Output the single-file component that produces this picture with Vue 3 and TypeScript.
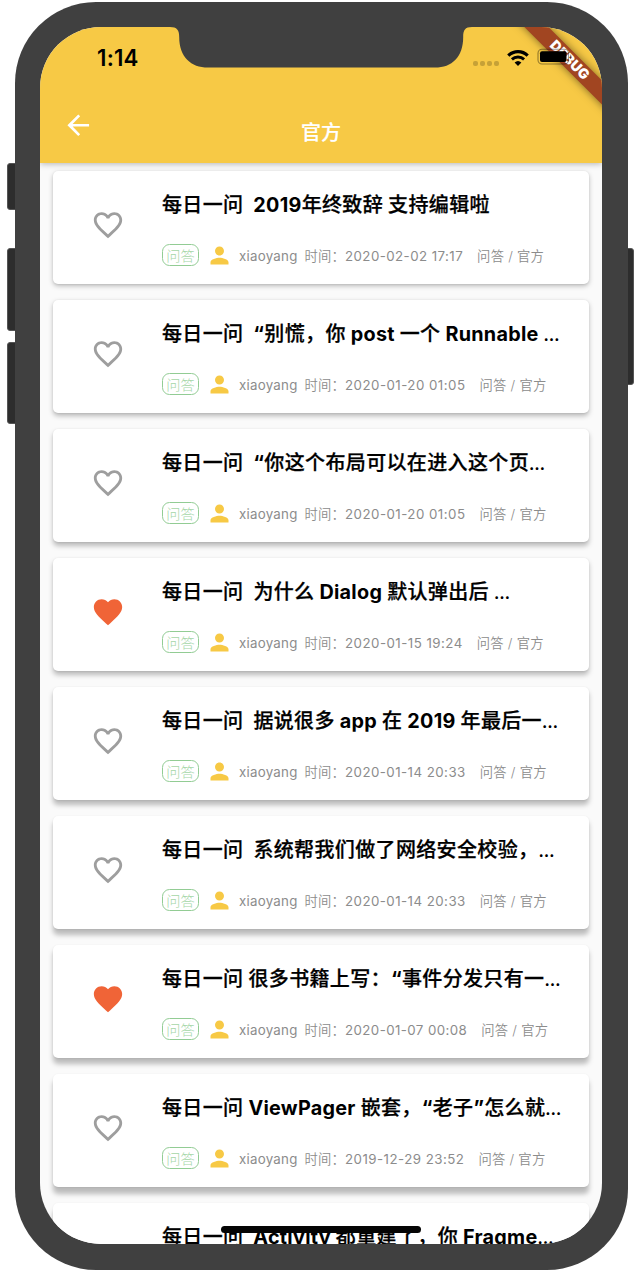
<script setup lang="ts">
interface Run {
  text: string
  kind: 'han' | 'latin' | 'dots'
}

interface Article {
  title: string
  date?: string
  liked: boolean
  dateSpacing?: number
}

const articles: Article[] = [
  { title: '每日一问  2019年终致辞 支持编辑啦', date: '2020-02-02 17:17', liked: false, dateSpacing: 0.43 },
  { title: '每日一问  “别慌，你 post 一个 Runnable …', date: '2020-01-20 01:05', liked: false, dateSpacing: 0.47 },
  { title: '每日一问  “你这个布局可以在进入这个页…', date: '2020-01-20 01:05', liked: false, dateSpacing: 0.47 },
  { title: '每日一问  为什么 Dialog 默认弹出后 …', date: '2020-01-15 19:24', liked: true, dateSpacing: 0.47 },
  { title: '每日一问  据说很多 app 在 2019 年最后一…', date: '2020-01-14 20:33', liked: false, dateSpacing: 0.45 },
  { title: '每日一问  系统帮我们做了网络安全校验，…', date: '2020-01-14 20:33', liked: false, dateSpacing: 0.45 },
  { title: '每日一问 很多书籍上写：“事件分发只有一…', date: '2020-01-07 00:08', liked: true, dateSpacing: 0.41 },
  { title: '每日一问 ViewPager 嵌套，“老子”怎么就…', date: '2019-12-29 23:52', liked: false, dateSpacing: 0.47 },
  { title: '每日一问  Activity 都重建了，你 Fragme…', liked: false },
]

// Splits a title so that Han and Latin text can carry different weights.
const runsOf = (title: string): Run[] =>
  (title.match(/…|[A-Za-z0-9“” ]+|[^A-Za-z0-9“” …]+/g) ?? []).map((text) => ({
    text,
    kind: text === '…' ? 'dots' : /^[A-Za-z0-9“” ]/.test(text) ? 'latin' : 'han',
  }))

const rows = articles.map((item) => ({ ...item, runs: runsOf(item.title) }))

// The light source sits above the screen, so lower cards throw longer shadows.
const cardShadow = (index: number): string => {
  const drop = 2 + index * 0.62
  return `0 ${drop.toFixed(1)}px 5px rgba(0, 0, 0, 0.25), 0 0.5px 2px rgba(0, 0, 0, 0.06)`
}
</script>

<template>
  <div class="stage">
    <i class="key key-mute"></i>
    <i class="key key-up"></i>
    <i class="key key-down"></i>
    <i class="key key-power"></i>
    <div class="phone">
      <div class="screen">
        <header class="appbar">
          <div class="status">
            <span class="clock">1:14</span>
            <span class="signal"><i v-for="n in 4" :key="n"></i></span>
            <svg class="wifi" viewBox="0 0 22 16">
              <path d="M1.3 5.7A13.8 13.8 0 0 1 20.7 5.7" fill="none" stroke="#000" stroke-width="3.2" />
              <path d="M4.9 9.4A8.8 8.8 0 0 1 17.1 9.4" fill="none" stroke="#000" stroke-width="2.9" />
              <path d="M7.6 12.6a5 5 0 0 1 6.8 0L11 16z" fill="#000" />
            </svg>
          </div>
          <div class="nav">
            <svg class="back" viewBox="0 0 24 24"><path d="M20 11H7.83l5.59-5.59L12 4l-8 8 8 8 1.41-1.41L7.83 13H20v-2z" /></svg>
            <h1>官方</h1>
          </div>
        </header>
        <main class="list">
          <article v-for="(item, i) in rows" :key="i" class="card" :style="{ boxShadow: cardShadow(i) }">
            <div class="like">
              <svg v-if="item.liked" class="heart liked" viewBox="0 0 24 24"><path d="M12 21.35l-1.45-1.32C5.4 15.36 2 12.28 2 8.5 2 5.42 4.42 3 7.5 3c1.74 0 3.41.81 4.5 2.09C13.09 3.81 14.76 3 16.5 3 19.58 3 22 5.42 22 8.5c0 3.78-3.4 6.86-8.55 11.54L12 21.35z" /></svg>
              <svg v-else class="heart" viewBox="0 0 24 24"><path d="M16.5 3c-1.74 0-3.41.81-4.5 2.09C10.91 3.81 9.24 3 7.5 3 4.42 3 2 5.42 2 8.5c0 3.78 3.4 6.86 8.55 11.54L12 21.35l1.45-1.32C18.6 15.36 22 12.28 22 8.5 22 5.42 19.58 3 16.5 3zm-4.4 15.55l-.1.1-.1-.1C7.14 14.24 4 11.39 4 8.5 4 6.5 5.5 5 7.5 5c1.54 0 3.04.99 3.57 2.36h1.87C13.46 5.99 14.96 5 16.5 5c2 0 3.5 1.5 3.5 3.5 0 2.89-3.14 5.74-7.9 10.05z" /></svg>
            </div>
            <div class="body">
              <h2><span v-for="(run, r) in item.runs" :key="r" :class="run.kind">{{ run.text }}</span></h2>
              <div v-if="item.date" class="meta">
                <span class="tag">问答</span>
                <svg class="person" viewBox="0 0 24 24"><path d="M12 12c2.21 0 4-1.79 4-4s-1.79-4-4-4-4 1.79-4 4 1.79 4 4 4zm0 2c-2.67 0-8 1.34-8 4v2h16v-2c0-2.66-5.33-4-8-4z" /></svg>
                <span class="author">xiaoyang</span>
                <span class="time">时间：</span>
                <span class="date" :style="{ letterSpacing: item.dateSpacing + 'px' }">{{ item.date }}</span>
                <span class="chapter">问答 / 官方</span>
              </div>
            </div>
          </article>
        </main>
        <div class="ribbon">DEBUG</div>
        <svg class="battery" viewBox="0 0 36 18">
          <rect x="1" y="1.2" width="30.5" height="14.8" rx="4" fill="none" stroke="#000" stroke-opacity=".4" stroke-width="1.1" />
          <rect x="3" y="3.2" width="26.5" height="10.8" rx="2" />
          <path d="M33 6.2v4.8c2.2-.8 2.2-4 0-4.8z" fill-opacity=".4" />
        </svg>
        <svg class="notch" viewBox="0 0 302 41"><path d="M0 0C7 0 9.2 3 9.2 10C9.2 30 21 40.6 38 40.6H265C282 40.6 293.2 30 293.2 10C293.2 3 295 0 302 0Z" /></svg>
        <div class="home"></div>
      </div>
    </div>
  </div>
</template>

<style>
body {
  margin: 0;
  background: #fff;
}
</style>

<style scoped>
.stage {
  position: relative;
  width: 642px;
  height: 1272px;
  overflow: hidden;
  background: #fff;
  font-family: Inter, "Noto Sans CJK SC", sans-serif;
}
.key {
  position: absolute;
  box-sizing: border-box;
  width: 12px;
  background: #2d2d2d;
  border: 1px solid #555;
  border-radius: 3px;
}
.key-mute { left: 6.5px; top: 163px; height: 47px; }
.key-up { left: 6.5px; top: 248px; height: 83px; }
.key-down { left: 6.5px; top: 342px; height: 82px; }
.key-power { left: 622px; top: 248px; height: 137px; }
.phone {
  position: relative;
  box-sizing: border-box;
  width: 613px;
  height: 1267.5px;
  margin-left: 14.5px;
  top: 2.3px;
  padding: 24.7px 25.5px 25.5px;
  border-radius: 81px;
  background: #404040;
}
.screen {
  position: relative;
  width: 562px;
  height: 1217px;
  overflow: hidden;
  border-radius: 61px;
  background: #fafafa;
}
.appbar {
  position: relative;
  z-index: 1;
  height: 136px;
  background: #f7c945;
  box-shadow: 0 1px 6px rgba(0, 0, 0, 0.28);
}
.status {
  display: flex;
  height: 62px;
  align-items: center;
}
.clock {
  width: 376px;
  padding-left: 57px;
  font-size: 22.3px;
  font-weight: 600;
  letter-spacing: 0.2px;
}
.signal {
  display: flex;
  gap: 2px;
  padding-top: 12px;
}
.signal i {
  width: 5px;
  height: 5px;
  border-radius: 2px;
  background: #c6a137;
}
.wifi {
  width: 22px;
  height: 16px;
  margin-left: 7.5px;
}
.nav {
  display: grid;
  grid-template-columns: 76px 1fr 76px;
  height: 76px;
  align-items: center;
}
.back {
  width: 32.5px;
  height: 32.5px;
  margin: -4px 0 0 21.5px;
  fill: #fff;
}
h1 {
  margin: 13px 0 0;
  color: #fff;
  text-align: center;
  font-size: 20px;
  font-weight: 500;
  line-height: 24px;
  -webkit-text-stroke: 0.2px #fff;
}
.list {
  display: flex;
  flex-direction: column;
  gap: 16px;
  padding: 8px 13.5px 0 13px;
}
.card {
  display: flex;
  flex: none;
  box-sizing: border-box;
  height: 113px;
  border-radius: 5px;
  background: #fff;
}
.like {
  display: flex;
  width: 109px;
  align-items: center;
  justify-content: center;
  padding-bottom: 4px;
  box-sizing: border-box;
}
.heart {
  width: 34px;
  height: 34px;
  fill: #9e9e9e;
}
.heart.liked {
  fill: #f06437;
}
.body {
  flex: 1;
  min-width: 0;
  padding-top: 18px;
}
h2 {
  margin: 0;
  height: 32px;
  color: #000;
  white-space: pre;
  font-size: 20px;
  line-height: 32px;
}
.han {
  font-weight: 500;
  letter-spacing: 0.36px;
  -webkit-text-stroke: 0.25px #000;
}
.latin {
  font-size: 19.8px;
  font-weight: 700;
  letter-spacing: 0.27px;
}
.dots {
  font-weight: 700;
  letter-spacing: 0;
  font-size: 16px;
}
.meta {
  display: flex;
  height: 28px;
  margin-top: 21px;
  align-items: center;
  white-space: pre;
  color: #8c8c8c;
  font-size: 13.3px;
  line-height: 20px;
}
.tag {
  box-sizing: border-box;
  width: 37px;
  height: 22px;
  border: 1px solid #92cc94;
  border-radius: 7.5px;
  margin-top: -1px;
  color: #a5d6a7;
  text-align: center;
  font-size: 14.2px;
  font-weight: 200;
  line-height: 21px;
}
.person {
  width: 27px;
  height: 27px;
  margin-left: 6.5px;
  fill: #f7c945;
}
.author {
  width: 65.5px;
  margin-left: 6.5px;
  letter-spacing: 0.25px;
}
.time {
  width: 40.5px;
  font-weight: 350;
  letter-spacing: 0.2px;
}
.chapter {
  margin-left: 14px;
  font-weight: 350;
  letter-spacing: 0.25px;
}
.ribbon {
  position: absolute;
  left: 459px;
  top: 24px;
  width: 140px;
  height: 16.5px;
  box-sizing: border-box;
  padding-left: 2px;
  color: #fff;
  background: #a14521;
  box-shadow: 0 0 8px rgba(0, 0, 0, 0.5);
  text-align: center;
  font-size: 14px;
  font-weight: 900;
  letter-spacing: 0.1px;
  line-height: 16.5px;
  transform: rotate(45deg);
  z-index: 2;
}
.battery {
  position: absolute;
  z-index: 3;
  left: 496.5px;
  top: 21.5px;
  width: 36px;
  height: 18px;
}
.notch {
  position: absolute;
  z-index: 4;
  left: 130px;
  top: 0;
  width: 302px;
  height: 41px;
  fill: #404040;
}
.home {
  position: absolute;
  z-index: 4;
  left: 181px;
  top: 1199px;
  width: 200px;
  height: 7px;
  border-radius: 4px;
  background: #050505;
}
</style>
